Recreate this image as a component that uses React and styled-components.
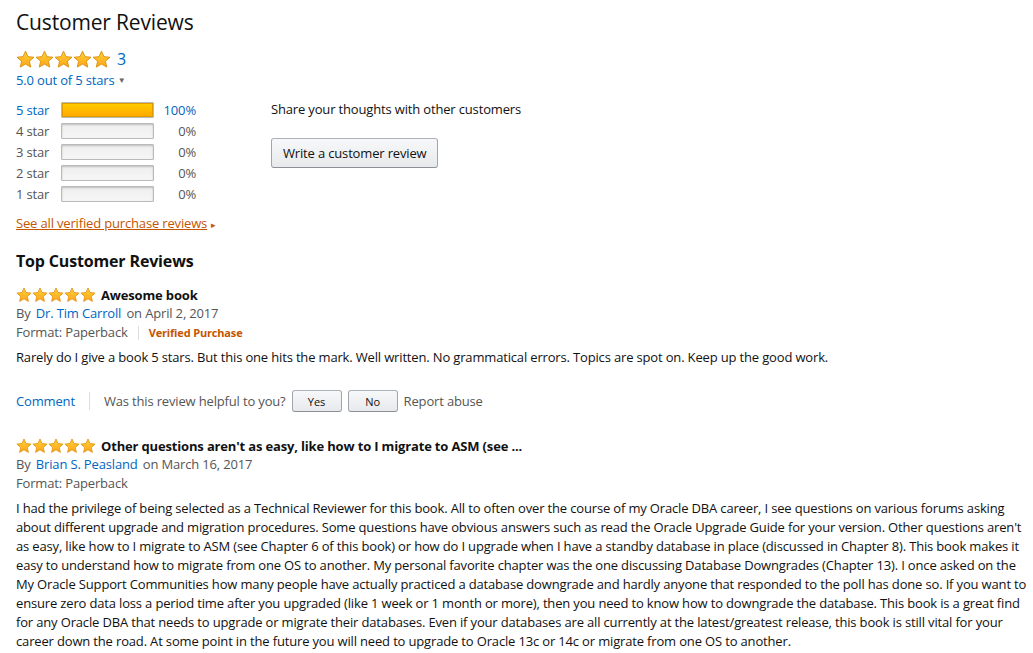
import styled, { createGlobalStyle } from 'styled-components';

const GlobalStyle = createGlobalStyle`
    body {
        margin: 0;
        background: #fff;
        font-family: "Open Sans", "Noto Sans", Arial, sans-serif;
        font-size: 13px;
        letter-spacing: -0.16px;
        color: #111;
    }
`;

const histogram = [
    { label: '5 star', pct: 100 },
    { label: '4 star', pct: 0 },
    { label: '3 star', pct: 0 },
    { label: '2 star', pct: 0 },
    { label: '1 star', pct: 0 },
];

const longReview = "I had the privilege of being selected as a Technical Reviewer for this book. All to often over the course of my Oracle DBA career, I see questions on various forums asking about different upgrade and migration procedures. Some questions have obvious answers such as read the Oracle Upgrade Guide for your version. Other questions aren't as easy, like how to I migrate to ASM (see Chapter 6 of this book) or how do I upgrade when I have a standby database in place (discussed in Chapter 8). This book makes it easy to understand how to migrate from one OS to another. My personal favorite chapter was the one discussing Database Downgrades (Chapter 13). I once asked on the My Oracle Support Communities how many people have actually practiced a database downgrade and hardly anyone that responded to the poll has done so. If you want to ensure zero data loss a period time after you upgraded (like 1 week or 1 month or more), then you need to know how to downgrade the database. This book is a great find for any Oracle DBA that needs to upgrade or migrate their databases. Even if your databases are all currently at the latest/greatest release, this book is still vital for your career down the road. At some point in the future you will need to upgrade to Oracle 13c or 14c or migrate from one OS to another.";

function Star({ size }) {
    return (
        <svg width={size} height={size} viewBox="0 0 20 20">
            <defs>
                <linearGradient id="starFill" x1="0" y1="0" x2="0" y2="1">
                    <stop offset="0" stopColor="#ffd233" />
                    <stop offset="1" stopColor="#ffa41c" />
                </linearGradient>
            </defs>
            <path
                d="M10 1.2 L12.6 7 L18.9 7.6 L14.1 11.8 L15.5 18 L10 14.8 L4.5 18 L5.9 11.8 L1.1 7.6 L7.4 7 Z"
                fill="url(#starFill)"
                stroke="#d68a00"
                strokeWidth="0.9"
                strokeLinejoin="round"
            />
        </svg>
    );
}

function Stars({ size }) {
    return (
        <StarRow>
            {[0, 1, 2, 3, 4].map(i => <Star key={i} size={size} />)}
        </StarRow>
    );
}

function App() {
    return (
        <Page>
            <GlobalStyle />
            <Title>Customer Reviews</Title>
            <Summary>
                <Stars size={19} />
                <CountLink>3</CountLink>
            </Summary>
            <OutOf>5.0 out of 5 stars <Caret>▼</Caret></OutOf>

            <Overview>
                <Histogram>
                    {histogram.map(row => (
                        <HistRow key={row.label}>
                            <HistLabel $active={row.pct > 0}>{row.label}</HistLabel>
                            <Bar>
                                <BarFill style={{ width: `${row.pct}%` }} />
                            </Bar>
                            <HistPct $active={row.pct > 0}>{row.pct}%</HistPct>
                        </HistRow>
                    ))}
                </Histogram>
                <ShareBox>
                    <ShareText>Share your thoughts with other customers</ShareText>
                    <Button>Write a customer review</Button>
                </ShareBox>
            </Overview>

            <SeeAll>See all verified purchase reviews</SeeAll><SeeAllArrow>▸</SeeAllArrow>

            <SubTitle>Top Customer Reviews</SubTitle>

            <Review>
                <ReviewHead>
                    <Stars size={16} />
                    <ReviewTitle>Awesome book</ReviewTitle>
                </ReviewHead>
                <Byline>By <Author>Dr. Tim Carroll</Author> on April 2, 2017</Byline>
                <Meta>
                    Format: Paperback<Divider /><Verified>Verified Purchase</Verified>
                </Meta>
                <Body>Rarely do I give a book 5 stars. But this one hits the mark. Well written. No grammatical errors. Topics are spot on. Keep up the good work.</Body>
                <Actions>
                    <ActionLink>Comment</ActionLink>
                    <Divider $tall />
                    <Helpful>Was this review helpful to you?</Helpful>
                    <SmallButton>Yes</SmallButton>
                    <SmallButton>No</SmallButton>
                    <Helpful>Report abuse</Helpful>
                </Actions>
            </Review>

            <Review>
                <ReviewHead>
                    <Stars size={16} />
                    <ReviewTitle>Other questions aren't as easy, like how to I migrate to ASM (see ...</ReviewTitle>
                </ReviewHead>
                <Byline>By <Author>Brian S. Peasland</Author> on March 16, 2017</Byline>
                <Meta>Format: Paperback</Meta>
                <Body>{longReview}</Body>
            </Review>
        </Page>
    );
}

export default App;

const Page = styled.div`
    padding: 8px 6px 0 16px;
`;

const Title = styled.h2`
    margin: 0;
    font-size: 21px;
    font-weight: 400;
    line-height: 28px;
    color: #111;
`;

const StarRow = styled.span`
    display: inline-flex;
    align-items: center;
`;

const Summary = styled.div`
    display: flex;
    align-items: center;
    gap: 6px;
    margin-top: 12px;
    height: 22px;
`;

const CountLink = styled.span`
    font-size: 16px;
    color: #0066c0;
`;

const OutOf = styled.div`
    color: #0066c0;
    line-height: 19px;
`;

const Caret = styled.span`
    font-size: 8px;
    color: #666;
    vertical-align: 2px;
`;

const Overview = styled.div`
    display: flex;
    margin-top: 9px;
`;

const Histogram = styled.div`
    width: 255px;
    display: flex;
    flex-direction: column;
`;

const HistRow = styled.div`
    display: flex;
    align-items: center;
    height: 21px;
`;

const HistLabel = styled.span`
    width: 45px;
    color: ${props => props.$active ? '#0066c0' : '#555'};
`;

const Bar = styled.div`
    width: 91px;
    height: 14px;
    border: 1px solid #bababa;
    border-radius: 1px;
    background: linear-gradient(to bottom, #eeeeee, #f6f6f6);
    box-shadow: inset 0 1px 2px rgba(0, 0, 0, 0.2);
    overflow: hidden;
`;

const BarFill = styled.div`
    height: 100%;
    background: linear-gradient(to bottom, #ffce00, #ffa700);
    box-shadow: inset 0 0 0 1px #de9b00;
`;

const HistPct = styled.span`
    width: 42px;
    text-align: right;
    color: ${props => props.$active ? '#0066c0' : '#555'};
`;

const ShareBox = styled.div`
    display: flex;
    flex-direction: column;
    align-items: flex-start;
    padding-top: 1px;
`;

const ShareText = styled.div`
    line-height: 19px;
`;

const Button = styled.button`
    margin-top: 19px;
    height: 30px;
    padding: 0 11px;
    font-family: inherit;
    font-size: 13px;
    letter-spacing: inherit;
    color: #111;
    background: linear-gradient(to bottom, #f7f8fa, #e7e9ec);
    border: 1px solid #adb1b8;
    border-color: #adb1b8 #a2a6ac #8d9096;
    border-radius: 3px;
`;

const SeeAll = styled.span`
    display: inline-block;
    margin-top: 10px;
    color: #c45500;
    text-decoration: underline;
    line-height: 19px;
`;

const SeeAllArrow = styled.span`
    color: #c45500;
    font-size: 9px;
    margin-left: 4px;
`;

const SubTitle = styled.h3`
    margin: 16px 0 0 0;
    font-size: 16px;
    font-weight: 700;
    line-height: 24px;
`;

const Review = styled.div`
    margin-top: 12px;
    & + & {
        margin-top: 24px;
    }
`;

const ReviewHead = styled.div`
    display: flex;
    align-items: center;
    gap: 5px;
    height: 19px;
`;

const ReviewTitle = styled.span`
    font-weight: 700;
`;

const Byline = styled.div`
    color: #555;
    line-height: 19px;
`;

const Author = styled.span`
    color: #0066c0;
    margin: 0 2px;
`;

const Meta = styled.div`
    display: flex;
    align-items: center;
    color: #555;
    line-height: 19px;
`;

const Divider = styled.span`
    display: inline-block;
    width: 1px;
    height: ${props => props.$tall ? 18 : 14}px;
    background: #ddd;
    margin: 0 ${props => props.$tall ? 14 : 10}px;
`;

const Verified = styled.span`
    color: #c45500;
    font-size: 11px;
    font-weight: 700;
`;

const Body = styled.p`
    margin: 6px 0 0 0;
    line-height: 19px;
`;

const Actions = styled.div`
    display: flex;
    align-items: center;
    margin-top: 23px;
`;

const ActionLink = styled.span`
    color: #0066c0;
`;

const Helpful = styled.span`
    color: #555;
`;

const SmallButton = styled.button`
    width: 50px;
    height: 22px;
    margin-left: 6px;
    font-family: inherit;
    font-size: 11px;
    color: #111;
    background: linear-gradient(to bottom, #f7f8fa, #e7e9ec);
    border: 1px solid #adb1b8;
    border-color: #adb1b8 #a2a6ac #8d9096;
    border-radius: 3px;
    & + span {
        margin-left: 6px;
    }
`;
